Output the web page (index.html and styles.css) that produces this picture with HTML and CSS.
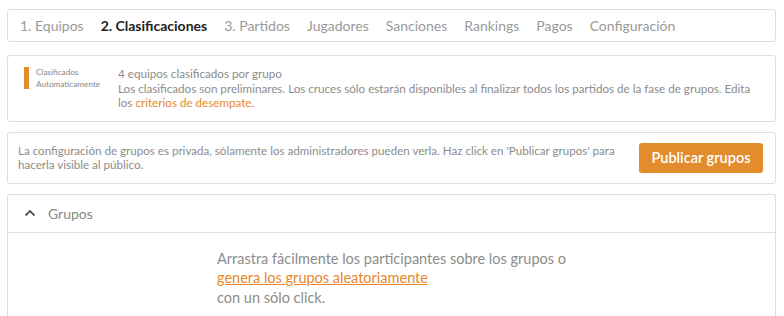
FILE: index.html
```html
<!DOCTYPE html>
<html lang="es">

<head>
    <meta charset="UTF-8">
    <meta name="viewport" content="width=device-width, initial-scale=1.0">
    <title>Clasificaciones</title>
    <link rel="stylesheet" href="styles.css">
</head>

<body>
    <div class="container">
        <nav class="card tabs">
            <a class="tab">1. Equipos</a>
            <a class="tab active">2. Clasificaciones</a>
            <a class="tab">3. Partidos</a>
            <a class="tab">Jugadores</a>
            <a class="tab">Sanciones</a>
            <a class="tab">Rankings</a>
            <a class="tab">Pagos</a>
            <a class="tab">Configuración</a>
        </nav>

        <div class="card qualified">
            <div class="qualified-label">
                <span>Clasificados</span>
                <span>Automaticamente</span>
            </div>
            <div class="qualified-text">
                <p>4 equipos clasificados por grupo</p>
                <p>Los clasificados son preliminares. Los cruces sólo estarán disponibles al finalizar todos los partidos de la fase de grupos. Edita los <a class="link">criterios de desempate</a>.</p>
            </div>
        </div>

        <div class="card publish">
            <p class="publish-text">La configuración de grupos es privada, sólamente los administradores pueden verla. Haz click en 'Publicar grupos' para hacerla visible al público.</p>
            <button class="btn-primary">Publicar grupos</button>
        </div>

        <div class="card groups">
            <div class="groups-header">
                <svg class="chevron" width="12" height="8" viewBox="0 0 12 8">
                    <path d="M1.5 6.5 L6 2 L10.5 6.5" fill="none" stroke="#555" stroke-width="1.8" />
                </svg>
                <span>Grupos</span>
            </div>
            <div class="groups-body">
                <p class="empty-msg">
                    Arrastra fácilmente los participantes sobre los grupos o<br>
                    <a class="link underline">genera los grupos aleatoriamente</a><br>
                    con un sólo click.
                </p>
            </div>
        </div>
    </div>
</body>

</html>
```

FILE: styles.css
```css
* {
    box-sizing: border-box;
    margin: 0;
    padding: 0;
    font-family: Lato, "Open Sans", sans-serif;
}

body {
    background: #ffffff;
    color: #8c8c8c;
}

.container {
    padding: 9px 8px 0 7px;
    display: flex;
    flex-direction: column;
    gap: 10px;
}

.card {
    border: 1px solid #dedede;
    border-radius: 3px;
    background: #fff;
}

.tabs {
    display: flex;
    align-items: center;
    height: 33px;
    padding: 0 12px;
    gap: 17px;
    margin-bottom: 3px;
}

.tab {
    font-size: 14px;
    color: #9a9a9a;
    white-space: nowrap;
}

.tab.active {
    color: #222;
    font-weight: 700;
}

.qualified {
    display: flex;
    padding: 11px 12px 10px 16px;
}

.qualified-label {
    flex: none;
    display: flex;
    flex-direction: column;
    justify-content: center;
    align-self: flex-start;
    height: 22px;
    width: 94px;
    border-left: 5px solid #e38c2e;
    padding-left: 7px;
    font-size: 8.2px;
    line-height: 12px;
    color: #888;
}

.qualified-text {
    font-size: 11.65px;
    line-height: 14.5px;
    color: #8c8c8c;
}

.link {
    color: #e8872c;
}

.underline {
    text-decoration: underline;
}

.publish {
    display: flex;
    align-items: center;
    justify-content: space-between;
    padding: 10px 12px 10px 10px;
    gap: 20px;
}

.publish-text {
    font-size: 11.6px;
    line-height: 14px;
}

.btn-primary {
    flex: none;
    width: 124px;
    height: 30px;
    background: #e38c2e;
    color: #fff;
    border: none;
    border-radius: 3px;
    font-size: 14.5px;
    font-weight: 600;
}

.groups {
    height: 130px;
    border-bottom: none;
    border-radius: 3px 3px 0 0;
}

.groups-header {
    display: flex;
    align-items: center;
    height: 38px;
    padding-left: 16px;
    gap: 12px;
    border-bottom: 1px solid #dedede;
    font-size: 14px;
    color: #888;
}

.groups-body {
    display: flex;
    justify-content: center;
    padding-top: 16px;
}

.empty-msg {
    font-size: 14.5px;
    line-height: 19.5px;
    color: #8c8c8c;
}
```
